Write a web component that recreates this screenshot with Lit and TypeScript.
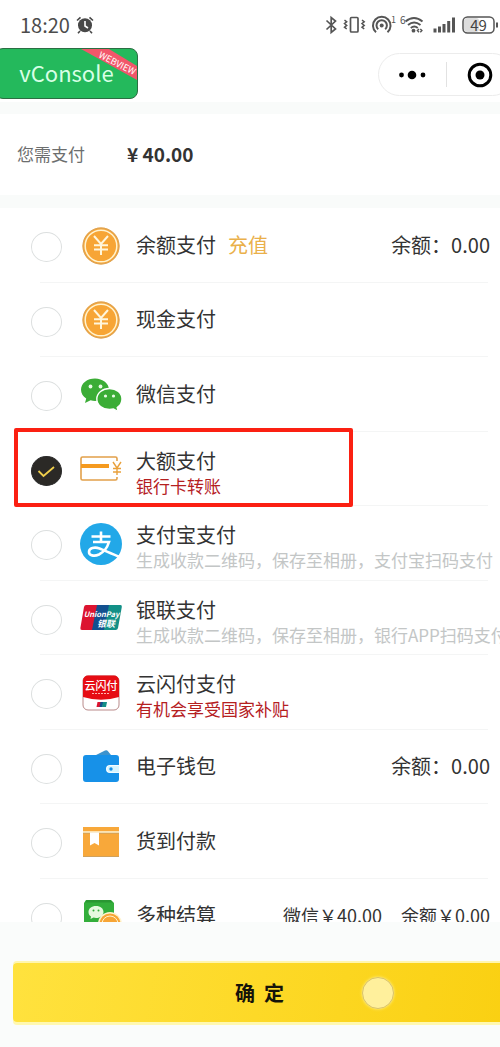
import { LitElement, html, css, svg, nothing, type TemplateResult } from "lit";
import { customElement, property, state } from "lit/decorators.js";

interface Method {
  id: string;
  icon: string;
  title: string;
  action?: string;
  note?: string;
  noteTone?: "muted" | "alert";
  amounts?: string[];
  compact?: boolean;
  marked?: boolean;
}

const METHODS: Method[] = [
  { id: "balance", icon: "coin", title: "余额支付", action: "充值", amounts: ["余额：0.00"] },
  { id: "cash", icon: "coin", title: "现金支付" },
  { id: "wechat", icon: "wechat", title: "微信支付" },
  { id: "large", icon: "card", title: "大额支付", note: "银行卡转账", noteTone: "alert", marked: true },
  { id: "alipay", icon: "alipay", title: "支付宝支付", note: "生成收款二维码，保存至相册，支付宝扫码支付", noteTone: "muted" },
  { id: "unionpay", icon: "unionpay", title: "银联支付", note: "生成收款二维码，保存至相册，银行APP扫码支付", noteTone: "muted" },
  { id: "quickpass", icon: "quickpass", title: "云闪付支付", note: "有机会享受国家补贴", noteTone: "alert" },
  { id: "wallet", icon: "wallet", title: "电子钱包", amounts: ["余额：0.00"] },
  { id: "cod", icon: "box", title: "货到付款" },
  { id: "multi", icon: "multi", title: "多种结算", amounts: ["微信￥40.00", "余额￥0.00"], compact: true },
];

const ICONS: Record<string, TemplateResult> = {
  coin: svg`
    <circle cx="22" cy="22" r="18.5" fill="#f7a535"/>
    <circle cx="22" cy="22" r="18" fill="none" stroke="#d9a45c" stroke-width="1"/>
    <circle cx="22" cy="22" r="15.8" fill="none" stroke="#fff3cf" stroke-width="1.5"/>
    <path d="M15 12l7 8 7-8M22 20v11M15 21.2h14M15 25.4h14" fill="none" stroke="#fff6dc" stroke-width="2"/>`,
  wechat: svg`
    <path d="M16 5.600C8.200 5.600 2 10.400 2 16.800c0 3.600 2 6.700 5.200 8.700L6 30l5.600-2.700c1.400.400 2.900.600 4.400.600 7.800 0 14-4.900 14-11.100S23.800 5.600 16 5.600z" fill="#3bad36"/>
    <path d="M30.500 15.500c-7 0-12.700 4.700-12.700 10.500s5.700 10.500 12.700 10.500c1.400 0 2.800-.200 4-.500l4.700 2.500-1-4c3-1.900 4.800-5 4.800-8.500 0-5.800-5.500-10.500-12.500-10.500z" fill="#3bad36" stroke="#fff" stroke-width="1.400"/>
    <circle cx="11.500" cy="13.500" r="1.900" fill="#e9fbe6"/><circle cx="21.500" cy="13.500" r="1.900" fill="#e9fbe6"/>
    <circle cx="26.500" cy="23" r="1.600" fill="#e9fbe6"/><circle cx="34.500" cy="23" r="1.600" fill="#e9fbe6"/>`,
  card: svg`
    <path d="M38 14v-2.500a1.500 1.500 0 0 0-1.500-1.500h-33A1.500 1.500 0 0 0 2 11.500v20A1.500 1.500 0 0 0 3.500 33h33a1.500 1.500 0 0 0 1.500-1.500V30" fill="none" stroke="#e2a04a" stroke-width="1.600"/>
    <path d="M2 19h28" stroke="#f59a1f" stroke-width="4"/>
    <path d="M34 15l4 6 4-6M38 21v7M34 21.500h8M34 25h8" fill="none" stroke="#e9a13c" stroke-width="1.400"/>`,
  alipay: svg`
    <circle cx="22" cy="22" r="21" fill="#22a8e8"/>
    <path d="M12.500 14.500h19M22 9.500v10.500M14 20h16c-1.500 5-5 10-10 12.500-5 2.200-10 1-10-2.600 0-3.900 5.500-5.200 10.500-3.400 4.500 1.600 12 5.300 20 8.200" fill="none" stroke="#fff" stroke-width="2.600"/>`,
  unionpay: svg`
    <path d="M7 9h15l-5 25H3q-2 0-1.600-2L5 11q.500-2 2-2z" fill="#dc1430"/>
    <path d="M18 9h13l-5 25H13z" fill="#12508f"/>
    <path d="M30 9h11.500q1.700 0 1.300 2L39 32q-.400 2-2.400 2H25z" fill="#129087"/>
    <text x="22.500" y="21" font-size="7.500" font-weight="700" font-style="italic" fill="#fff" text-anchor="middle">UnionPay</text>
    <text x="27" y="31" font-size="9" font-weight="700" font-style="italic" fill="#fff" text-anchor="middle">银联</text>`,
  quickpass: svg`
    <rect x="4" y="5" width="36" height="34" rx="5" fill="#fff" stroke="#b98a8a" stroke-width="1"/>
    <path d="M9 4.500h26a5 5 0 0 1 5 5V26Q22 31.500 4 26V9.500a5 5 0 0 1 5-5z" fill="#e60d14"/>
    <text x="22" y="18.500" font-size="11" font-weight="500" fill="#fff" text-anchor="middle">云闪付</text>
    <path d="M13 22.500h18" stroke="#ffb5b0" stroke-width="1" stroke-dasharray="2 1"/>
    <path d="M18.500 31h4l-1 5h-4z" fill="#dc1430"/><path d="M21.500 31h3l-1 5h-3z" fill="#12508f"/><path d="M24 31h4l-1 5h-4z" fill="#129087"/>`,
  wallet: svg`
    <path d="M17 10l9-4.500q2-1 3 .800L32 10z" fill="#3c93cd"/>
    <path d="M7 10h30q3 0 3 3v7H31a4 4 0 0 0 0 8h9v6q0 3-3 3H7q-3 0-3-3V13q0-3 3-3z" fill="#1791e8"/>
    <path d="M31.500 20.800H40v6.400h-8.500a3.200 3.200 0 0 1 0-6.400z" fill="#d6f4ff"/>
    <circle cx="32" cy="24" r="1.700" fill="#1791e8"/>`,
  box: svg`
    <path d="M4 7h36v4.500H4zM4 13h36v24H4z" fill="#f8a83a"/>
    <path d="M4 11.600h36v1.200H4z" fill="#fff2c2"/>
    <path d="M4 36.500h36M4 13.200h36" stroke="#d0a15c" stroke-width="1"/>
    <path d="M11 12.500h9v13l-4.500-2.500-4.500 2.500z" fill="#fff"/>`,
  multi: svg`
    <path d="M7 6h25l3 3v22H5V9z" fill="#33ae3b"/>
    <path d="M8 6h23l3 2.500H6z" fill="#2a9732"/>
    <path d="M17 12c-4.500 0-7.500 2.600-7.500 6 0 2 1 3.500 2.500 4.500l-.500 2.500 3-1.400q1.200.400 2.500.400c4.500 0 7.500-2.600 7.500-6s-3-6-7.500-6z" fill="#e6f9df"/>
    <circle cx="14.500" cy="16.500" r="1" fill="#33ae3b"/><circle cx="19.500" cy="16.500" r="1" fill="#33ae3b"/>
    <circle cx="31" cy="30" r="12" fill="#fff3cf"/><circle cx="31" cy="30" r="10.500" fill="#f7a535"/>
    <circle cx="31" cy="30" r="8" fill="none" stroke="#fff3cf" stroke-width="1"/>`,
};

@customElement("status-bar")
class StatusBar extends LitElement {
  static styles = css`
    :host { display: block; }
    .bar { display: flex; align-items: center; justify-content: space-between; height: 48px; padding: 2px 2px 0 20px; box-sizing: border-box; color: #555; }
    .time { display: flex; align-items: center; gap: 6px; font-size: 20px; line-height: 24px; color: #4c4c4c; }
    .icons { display: block; }
    svg { display: block; }
  `;
  render() {
    return html`<div class="bar">
      <div class="time">18:20
        <svg width="18" height="18" viewBox="0 0 18 18" aria-hidden="true">
          <circle cx="9" cy="9.300" r="7" fill="#484848"/>
          <path d="M9 5v5l3 2" fill="none" stroke="#fff" stroke-width="1.600"/>
          <path d="M1 4.500L4.500 1.300M17 4.500L13.500 1.300M4 15l-2 2.300M14 15l2 2.300" stroke="#484848" stroke-width="1.600"/>
        </svg>
      </div>
      <svg class="icons" width="174" height="24" viewBox="324 13 174 24" aria-hidden="true" fill="none" stroke="#555" stroke-width="1.700">
        <path d="M326.500 20.500l9 8.500-4.300 3.500v-15l4.300 3.500-9 8.500"/>
        <rect x="350.500" y="17.500" width="7.500" height="14.500" rx="1"/>
        <path d="M344.500 20l2.200 1.800-2.200 1.800 2.200 1.800-2.200 1.800 2.200 1.800M362 20l2.200 1.800-2.200 1.800 2.200 1.800-2.200 1.800 2.200 1.800" stroke-width="1.500"/>
        <path d="M376 32.200a8.800 8.800 0 1 1 11.500 0M378.200 29.200a5.200 5.200 0 1 1 7 0" stroke-width="2"/>
        <circle cx="381.700" cy="25.500" r="2" fill="#555" stroke="none"/>
        <text x="391" y="23" font-size="9" fill="#555" stroke="none">1</text>
        <text x="400" y="24" font-size="10" fill="#555" stroke="none">6</text>
        <path d="M405.500 21.500q8.500-7 17 0M408 25q6-5 12.500 0M410.800 28q3.500-2.800 7 0" stroke-width="1.900"/>
        <circle cx="413.500" cy="30.700" r="1.900" fill="#555" stroke="none"/>
        <path d="M419 29l-1.600 1.600 1.600 1.600M420.300 29l1.600 1.600-1.600 1.600" stroke-width="1.400"/>
        <path d="M435 28.500v4M439.500 26.500v6M444 24v8.500M448.700 21v11.500M453.500 17.500v15" stroke-width="3"/>
        <rect x="463" y="17" width="31" height="16" rx="4.500" stroke-width="1.500"/>
        <rect x="464" y="18" width="15" height="14" rx="3" fill="#ddd" stroke="none"/>
        <text x="478.500" y="30.500" font-size="15" fill="#444" stroke="none" text-anchor="middle">49</text>
        <path d="M497 22.500v5" stroke-width="2"/>
      </svg>
    </div>`;
  }
}

@customElement("app-header")
class AppHeader extends LitElement {
  static styles = css`
    :host { display: block; }
    .head { display: flex; justify-content: space-between; align-items: flex-start; height: 54px; overflow: hidden; }
    button { font: inherit; border: 0; padding: 0; background: none; cursor: pointer; }
    .console { position: relative; width: 143px; height: 51px; margin-left: -5px; box-sizing: border-box; border: 1px solid #2c6e43; border-radius: 8px; background: #24b95c; color: #d8ffe6; font-size: 22px; line-height: 46px; overflow: hidden; padding-bottom: 3px; }
    .ribbon { position: absolute; top: 0; right: 0; }
    .capsule { display: flex; align-items: center; width: 136px; height: 43px; box-sizing: border-box; margin: 5px -14px 0 0; border: 1px solid #ececec; border-radius: 22px; }
    .capsule button { height: 40px; flex: 1; display: flex; align-items: center; justify-content: center; }
    .rule { width: 1px; height: 25px; background: #e2e2e2; }
  `;
  render() {
    return html`<div class="head">
      <button class="console">vConsole
        <svg class="ribbon" width="60" height="36" viewBox="0 0 60 36" aria-hidden="true">
          <path d="M4 0h28l28 17v14z" fill="#f2566a"/>
          <text x="0" y="0" font-size="9" fill="#fff" transform="translate(21 8) rotate(27)">WEBVIEW</text>
        </svg>
      </button>
      <div class="capsule">
        <button aria-label="更多">
          <svg width="28" height="10" viewBox="0 0 28 10"><circle cx="3.500" cy="5" r="2.400"/><circle cx="14" cy="5" r="4.300"/><circle cx="25" cy="5" r="2.400"/></svg>
        </button>
        <span class="rule"></span>
        <button aria-label="关闭">
          <svg width="26" height="26" viewBox="0 0 26 26"><circle cx="13" cy="13" r="10.800" fill="none" stroke="#000" stroke-width="3"/><circle cx="13" cy="13" r="4.500"/></svg>
        </button>
      </div>
    </div>`;
  }
}

@customElement("pay-method")
class PayMethod extends LitElement {
  @property({ attribute: false }) method!: Method;
  @property({ type: Boolean }) checked = false;

  static styles = css`
    :host { display: block; position: relative; flex: none; }
    .row { display: flex; align-items: center; height: 100%; padding: 0 10px 0 31px; box-sizing: border-box; white-space: nowrap; color: #333; }
    .line { position: absolute; left: 40px; right: 12px; bottom: 0; height: 1px; background: #f4f5f5; }
    input { appearance: none; flex: none; width: 31px; height: 30px; margin: 3px 17px 0 0; border: 1px solid #dcdfdf; border-radius: 50%; background: #fff; }
    input:checked { border-color: #2b2b2b; background: #2b2926; }
    .tick { position: absolute; left: 31px; top: 24px; pointer-events: none; }
    .icon { flex: none; width: 44px; height: 44px; margin-right: 13px; }
    .text { flex: 1; min-width: 0; padding-bottom: 2px; }
    .noted { padding: 7px 0 0; }
    label { font-size: 20px; line-height: 26px; }
    a { margin-left: 12px; font-size: 20px; line-height: 26px; color: #eab04a; text-decoration: none; }
    .note { font-size: 17px; line-height: 24px; }
    .muted { color: #c3c6c6; }
    .alert { color: #b5201f; }
    .amounts { display: flex; gap: 19px; padding-bottom: 2px; font-size: 20px; line-height: 26px; }
    .compact { font-size: 18px; }
    .mark { position: absolute; left: 14px; top: -4px; bottom: -1px; width: 339px; box-sizing: border-box; border: 4px solid #fb2012; border-radius: 2px; pointer-events: none; }
  `;

  private pick() {
    this.dispatchEvent(new CustomEvent("pick", { detail: this.method.id }));
  }

  render() {
    const m = this.method;
    return html`<div class="row">
        <input type="radio" id="choice" name="method" .checked=${this.checked} @change=${this.pick} />
        ${this.checked
          ? html`<svg class="tick" width="31" height="30" viewBox="0 0 31 30" aria-hidden="true"><path d="M7.500 15l5 5L23 11" fill="none" stroke="#f0cf4c" stroke-width="1.800"/></svg>`
          : nothing}
        <svg class="icon" viewBox="0 0 44 44" aria-hidden="true">${ICONS[m.icon]}</svg>
        <div class="text ${m.note ? "noted" : ""}">
          <label for="choice">${m.title}</label>${m.action ? html`<a href="#recharge">${m.action}</a>` : nothing}
          ${m.note ? html`<div class="note ${m.noteTone}">${m.note}</div>` : nothing}
        </div>
        ${m.amounts
          ? html`<div class="amounts ${m.compact ? "compact" : ""}">${m.amounts.map((a) => html`<span>${a}</span>`)}</div>`
          : nothing}
      </div>
      <div class="line"></div>
      ${m.marked ? html`<div class="mark"></div>` : nothing}`;
  }
}

@customElement("app-root")
class AppRoot extends LitElement {
  @state() private selected = "large";

  static styles = css`
    :host { display: flex; flex-direction: column; height: 100vh; overflow: hidden; background: #fff; font-family: "Noto Sans CJK SC", "Noto Sans", sans-serif; }
    .due { display: flex; align-items: center; gap: 42px; height: 79px; padding: 0 17px 2px; border: solid #f9fbfa; border-width: 12px 0 13px; }
    .caption { font-size: 17px; line-height: 24px; color: #6c6e6e; }
    .sum { font-size: 19px; line-height: 24px; font-weight: 700; color: #333; }
    .list { flex: 1; min-height: 0; overflow-y: auto; scrollbar-width: none; display: flex; flex-direction: column; }
    .item { height: 75px; }
    .item:nth-child(even) { height: 74px; }
    .foot { position: relative; flex: none; padding: 41px 0 25px 13px; background: #fafcfb; }
    .confirm { display: block; width: calc(100% + 6px); height: 59px; border: 0; border-radius: 4px; background: linear-gradient(100deg, #ffe23e, #fdd927 50%, #fad012); box-shadow: 0 -2px 0 #fff6ae, 0 3px 0 #fff8b0; font: inherit; font-size: 20px; font-weight: 700; color: #15130a; cursor: pointer; }
    .touch { position: absolute; left: 362px; top: 55px; width: 32px; height: 32px; box-sizing: border-box; border: 1px solid #d9c36a; border-radius: 50%; background: #fff09c; box-shadow: 0 0 3px #ffef8f; pointer-events: none; }
  `;

  render() {
    return html`
      <status-bar></status-bar>
      <app-header></app-header>
      <section class="due"><span class="caption">您需支付</span><span class="sum">¥ 40.00</span></section>
      <div class="list" role="radiogroup" aria-label="支付方式">
        ${METHODS.map(
          (m) => html`<pay-method class="item" .method=${m} ?checked=${m.id === this.selected}
            @pick=${(e: CustomEvent<string>) => (this.selected = e.detail)}></pay-method>`,
        )}
      </div>
      <footer class="foot">
        <button class="confirm">确&nbsp; 定</button>
        <span class="touch"></span>
      </footer>`;
  }
}
